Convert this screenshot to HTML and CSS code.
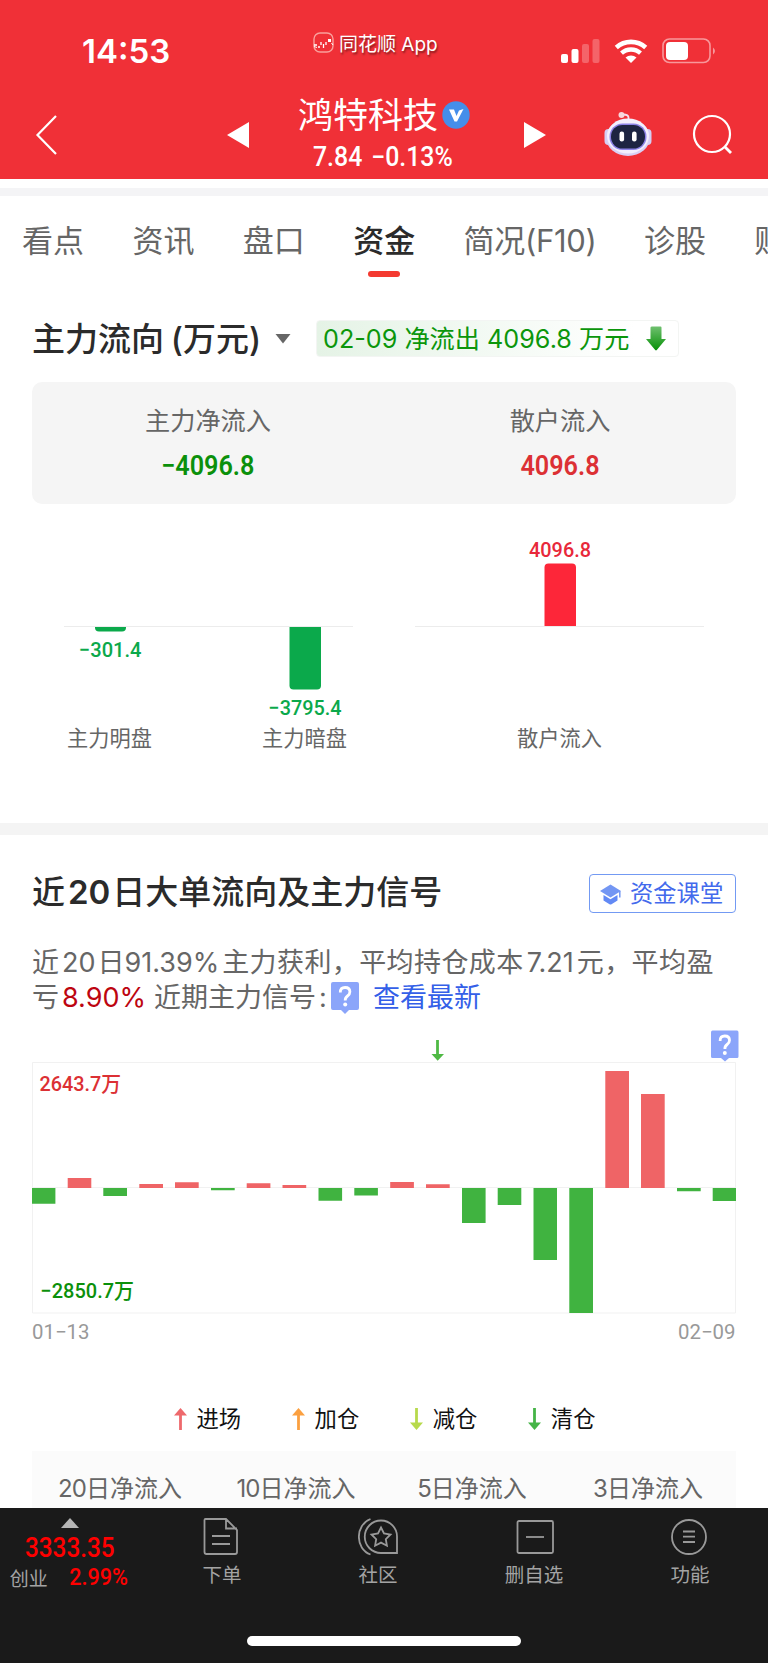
FILE: index.html
```html
<!DOCTYPE html>
<html lang="zh-CN">
<head>
    <meta charset="UTF-8">
    <meta name="viewport" content="width=device-width, initial-scale=1.0">
    <title>鸿特科技 - 资金</title>
    <link rel="stylesheet" href="styles.css">
</head>
<body>
    <header class="header">
        <div class="status-bar">
            <div class="time">14:53</div>
            <div class="app-name">
                <svg width="22" height="22" viewBox="0 0 22 22" fill="none">
                    <rect x="1" y="1" width="19" height="19" rx="6" stroke="#f9a09c" stroke-width="1.4"/>
                    <path d="M1 13h3M5 15h2M8 10v3M10.500 12v4M13 10v3" stroke="#fff" stroke-width="1.3"/>
                    <rect x="15" y="7" width="3" height="3" fill="#fff"/>
                    <path d="M1 14.500l3 1M18.500 11l1.500 2" stroke="#fff"/>
                </svg>
                <span>同花顺 App</span>
            </div>
            <svg class="status-icons" width="156" height="28" viewBox="0 0 156 28" fill="#fff">
                <rect x="1" y="16" width="7" height="9" rx="2"/>
                <rect x="11.500" y="11" width="7" height="14" rx="2"/>
                <rect x="22" y="6" width="7" height="19" rx="2" opacity=".25"/>
                <rect x="32.500" y="1" width="7" height="24" rx="2" opacity=".25"/>
                <path d="M56.300 9.500a22 22 0 0 1 29.400 0" fill="none" stroke="#fff" stroke-width="4.600"/>
                <path d="M61.500 15.200a14 14 0 0 1 19 0" fill="none" stroke="#fff" stroke-width="4.300"/>
                <path d="M65.500 19.600a8 8 0 0 1 11 0L71 25z"/>
                <rect x="103" y="1" width="47" height="23.500" rx="6.500" fill="none" stroke="#fff" stroke-width="1.600" opacity=".5"/>
                <rect x="106" y="4" width="22" height="18" rx="4"/>
                <path d="M153 9.500q4 3.500 0 7z" opacity=".5"/>
            </svg>
        </div>
        <div class="nav-bar">
            <svg class="back" width="24" height="42" viewBox="0 0 24 42" fill="none" stroke="#fff" stroke-width="2.200">
                <path d="M21 2L2.500 21L21 40"/>
            </svg>
            <svg class="prev" width="22" height="26" viewBox="0 0 22 26" fill="#fff"><path d="M22 0v26L0 13z"/></svg>
            <div class="stock">
                <div class="stock-name">
                    <span>鸿特科技</span>
                    <svg width="28" height="28" viewBox="0 0 28 28">
                        <circle cx="14" cy="14" r="13.700" fill="#458eea"/>
                        <path d="M7 8.500h5l2.500 6.500l2.500-5.500l4.500-1.500L15 20.500h-2.500z" fill="#fff"/>
                    </svg>
                </div>
                <div class="stock-price"><span class="num">7.84 −0.13%</span></div>
            </div>
            <svg class="next" width="22" height="26" viewBox="0 0 22 26" fill="#fff"><path d="M0 0v26l22-13z"/></svg>
            <svg class="robot" width="48" height="46" viewBox="0 0 48 46">
                <path d="M24.500 9V6.500q0-3-5.500-3" fill="none" stroke="#f4dfee" stroke-width="1.800"/>
                <circle cx="17.500" cy="4" r="3" fill="#f8d6dc"/>
                <rect x="0.500" y="18" width="8" height="16" rx="4" fill="#d5cef3"/>
                <rect x="39.500" y="18" width="8" height="16" rx="4" fill="#d5cef3"/>
                <ellipse cx="24" cy="26.500" rx="22" ry="18.500" fill="#d9d0f5"/>
                <ellipse cx="24" cy="25" rx="21" ry="17.500" fill="#f3effd"/>
                <rect x="5.500" y="12.500" width="37" height="26.500" rx="13" fill="#8c82e6"/>
                <rect x="7" y="14" width="34" height="23.500" rx="11.500" fill="#1d2442"/>
                <rect x="15.500" y="20.500" width="4.600" height="10" rx="2.200" fill="#fff"/>
                <rect x="28" y="20.500" width="4.600" height="10" rx="2.200" fill="#fff"/>
            </svg>
            <svg class="search" width="42" height="42" viewBox="0 0 42 42" fill="none" stroke="#fff" stroke-width="2.200">
                <circle cx="20" cy="20" r="18"/>
                <path d="M32.500 32.500l6.500 6.500" stroke-width="2.800"/>
            </svg>
        </div>
    </header>

    <nav class="tabs">
        <a>看点</a>
        <a>资讯</a>
        <a>盘口</a>
        <a class="active">资金</a>
        <a class="tab-f10">简况(F10)</a>
        <a>诊股</a>
        <a>财务</a>
    </nav>

    <section class="flow">
        <div class="flow-head">
            <h2>主力流向 (万元)</h2>
            <svg class="caret" width="16" height="10" viewBox="0 0 16 10"><path d="M0.500 0h15L8 9.500z" fill="#666"/></svg>
            <div class="badge">
                <span>02-09 净流出 4096.8 万元</span>
                <svg width="20" height="25" viewBox="0 0 20 25">
                    <defs>
                        <linearGradient id="down" x1="0" y1="0" x2="0" y2="1">
                            <stop offset="0" stop-color="#6fc06f"/>
                            <stop offset="1" stop-color="#069006"/>
                        </linearGradient>
                    </defs>
                    <path d="M6 0.500h8.500q1 0 1 1V13H20L10.800 24q-.8.800-1.600 0L0 13h4.500V1.500q0-1 1.500-1z" fill="url(#down)"/>
                </svg>
            </div>
        </div>
        <div class="summary">
            <div class="summary-item">
                <p>主力净流入</p>
                <strong class="num green">−4096.8</strong>
            </div>
            <div class="summary-item">
                <p>散户流入</p>
                <strong class="num red">4096.8</strong>
            </div>
        </div>
        <svg class="flow-chart" width="704" height="256" viewBox="32 524 704 256">
            <path d="M64 626.500h289M415 626.500h289" stroke="#ececec"/>
            <path d="M95 627h31v.5q0 4-4 4H99q-4 0-4-4z" fill="#0ba94b"/>
            <path d="M289.500 627h31.500v58.500q0 4-4 4h-23.500q-4 0-4-4z" fill="#0ba94b"/>
            <path d="M544.500 626v-58.500q0-4 4-4H572q4 0 4 4V626z" fill="#fd2639"/>
            <g class="bar-value">
                <text x="79" y="656.800" textLength="62.500" lengthAdjust="spacingAndGlyphs" fill="#0ba94b">−301.4</text>
                <text x="268.500" y="714.500" textLength="73" lengthAdjust="spacingAndGlyphs" fill="#0ba94b">−3795.4</text>
                <text x="529" y="557" textLength="62" lengthAdjust="spacingAndGlyphs" fill="#e8283a">4096.8</text>
            </g>
            <g class="bar-label">
                <text x="109.500" y="745.500">主力明盘</text>
                <text x="304.500" y="745.500">主力暗盘</text>
                <text x="559.500" y="745.500">散户流入</text>
            </g>
        </svg>
    </section>

    <section class="signal">
        <div class="signal-head">
            <h2>近<b>20</b>日大单流向及主力信号</h2>
            <a class="course">
                <svg width="22" height="22" viewBox="0 0 22 22" fill="#6289f5">
                    <path d="M0 8L10.500 1.500L21 8L10.500 14.500z" fill="#7396f3"/>
                    <path d="M3.500 12l7 4.300l7-4.300v5.500l-6 3.700q-1 .6-2 0l-6-3.700z"/>
                    <path d="M19.800 8v6.500" stroke="#7396f3" stroke-width="1.500"/>
                </svg>
                <span>资金课堂</span>
            </a>
        </div>
        <div class="desc">
            <div class="desc-line"><span>近</span><span class="sp">20</span><span class="day">日</span><span>91.39%</span><span class="sp cjk">主力获利，</span><span class="cjk">平均持仓成本</span><span class="sp">7.21</span><span class="sp cjk">元，</span><span class="cjk">平均盈</span></div>
            <div class="desc-line">
                <span>亏</span><span class="sp profit">8.90%</span><span class="recent">近期主力信号</span><span class="colon">:</span>
                <svg class="help" width="28" height="32" viewBox="0 0 28 32">
                    <path d="M2 0h24q2 0 2 2v24q0 2-2 2h-8l-4 4l-4-4H2q-2 0-2-2V2q0-2 2-2z" fill="#8ba5fa"/>
                    <path d="M9.300 10.500q0-5 4.800-5t4.800 4.300q0 2.500-2.400 4.200t-2.300 4.500" fill="none" stroke="#fff" stroke-width="2.800"/>
                    <circle cx="14.200" cy="22.600" r="2" fill="#fff"/>
                </svg>
                <a class="latest">查看最新</a>
            </div>
        </div>
        <svg class="history" width="708" height="320" viewBox="32 1028 708 320">
            <path d="M32.500 1062.500h703v250.500h-703zM32 1187.500h704" fill="none" stroke="#f1f1f1"/>
            <g fill="#ef6466">
                <path d="M67.700 1178h23.600v10H67.700zM139.300 1184h23.700v4h-23.700zM175 1182.300h23.700v5.700H175zM246.700 1183.300h23.700v4.700h-23.700zM282.500 1185h23.700v3h-23.700zM390.200 1182h23.700v6h-23.700zM426 1184.200h23.700v3.800H426zM605.300 1071h23.700v117h-23.700zM641 1094h23.700v94H641z"/>
            </g>
            <g fill="#40b340">
                <path d="M32 1188h23.400v15.700H32zM103.300 1188H127v8h-23.700zM211 1188h23.700v2.300H211zM318.500 1188h23.600v12.700h-23.600zM354.300 1188h23.600v7.500h-23.600zM462 1188h23.600v35H462zM497.700 1188h23.600v17h-23.600zM533.500 1188H557v72h-23.500zM569.300 1188H593v125h-23.700zM677 1188h23.700v3.200H677zM712.700 1188H736v13h-23.300z"/>
            </g>
            <path d="M437.500 1040v17" stroke="#4fb944" stroke-width="2.800"/>
            <path d="M431.500 1054h12.500l-6.300 6.700z" fill="#4fb944"/>
            <g transform="translate(711 1030.500)">
                <path d="M1.500 0H26q1.500 0 1.500 2v24q0 1.500-1.500 1.500h-8l-4 3.500l-4-3.500H1.500Q0 27.500 0 26V2q0-2 1.500-2z" fill="#8ba5fa"/>
                <path d="M9.100 10.500q0-5 4.700-5t4.700 4.300q0 2.500-2.400 4.200t-2.200 4.500" fill="none" stroke="#fff" stroke-width="2.800"/>
                <circle cx="13.800" cy="22.400" r="2" fill="#fff"/>
            </g>
            <g class="axis-value">
                <text x="39.500" y="1090.500" textLength="81.500" lengthAdjust="spacingAndGlyphs" fill="#dc3034">2643.7万</text>
                <text x="40.500" y="1297.500" textLength="93.500" lengthAdjust="spacingAndGlyphs" fill="#0b900b">−2850.7万</text>
            </g>
            <g class="axis-date">
                <text x="32" y="1338.500" textLength="57.500" lengthAdjust="spacingAndGlyphs">01−13</text>
                <text x="678" y="1338.500" textLength="57.500" lengthAdjust="spacingAndGlyphs">02−09</text>
            </g>
        </svg>
        <ul class="legend">
            <li>
                <svg width="13" height="22" viewBox="0 0 13 22"><path d="M6.500 4v18" stroke="#ee696c" stroke-width="2.800"/><path d="M0 7.500h13L6.500 0z" fill="#ee696c"/></svg>
                <span>进场</span>
            </li>
            <li>
                <svg width="13" height="22" viewBox="0 0 13 22"><path d="M6.500 4v18" stroke="#fba040" stroke-width="2.800"/><path d="M0 7.500h13L6.500 0z" fill="#fba040"/></svg>
                <span>加仓</span>
            </li>
            <li>
                <svg width="13" height="22" viewBox="0 0 13 22"><path d="M6.500 0v18" stroke="#b7da4c" stroke-width="2.800"/><path d="M0 14.500h13L6.500 22z" fill="#b7da4c"/></svg>
                <span>减仓</span>
            </li>
            <li>
                <svg width="13" height="22" viewBox="0 0 13 22"><path d="M6.500 0v18" stroke="#45b447" stroke-width="2.800"/><path d="M0 14.500h13L6.500 22z" fill="#45b447"/></svg>
                <span>清仓</span>
            </li>
        </ul>
        <div class="period">
            <span><i>20</i>日净流入</span>
            <span><i>10</i>日净流入</span>
            <span><i>5</i>日净流入</span>
            <span><i>3</i>日净流入</span>
        </div>
    </section>

    <footer class="toolbar">
        <div class="toolbar-row">
            <div class="index">
                <svg width="18" height="10" viewBox="0 0 18 10"><path d="M0 10L9 0l9 10z" fill="#b5b5b5"/></svg>
                <div class="index-value"><span class="num">3333.35</span></div>
                <div class="index-change"><span>创业</span><span class="num">2.99%</span></div>
            </div>
            <a class="tool">
                <svg width="40" height="38" viewBox="0 0 40 38" fill="none" stroke="#999" stroke-width="1.800">
                    <path d="M3.500 1H24l11 11v22q0 2-2 2H4.500q-2 0-2-2V2q0-1 1-1zM24 1v9.500h11M10 18h18M10 26h18"/>
                </svg>
                <span>下单</span>
            </a>
            <a class="tool">
                <svg width="40" height="38" viewBox="0 0 40 38" fill="none" stroke="#999" stroke-width="1.800">
                    <path d="M12.500 1C-3 7-3 31 12.500 36.500"/>
                    <path d="M23 2.500a16 16 0 0 0 0 32.500h16V19A16 16 0 0 0 23 2.500z"/>
                    <path d="M23 9.500l3 6l6.500 1l-4.700 4.700l1.100 6.500l-5.900-3.100l-5.900 3.100l1.100-6.500L13.500 16.500l6.500-1z"/>
                </svg>
                <span>社区</span>
            </a>
            <a class="tool">
                <svg width="40" height="38" viewBox="0 0 40 38" fill="none" stroke="#999" stroke-width="1.800">
                    <rect x="3.500" y="3" width="35.500" height="32" rx="1.500"/>
                    <path d="M12 19h18"/>
                </svg>
                <span>删自选</span>
            </a>
            <a class="tool">
                <svg width="40" height="38" viewBox="0 0 40 38" fill="none" stroke="#999" stroke-width="1.800">
                    <circle cx="19" cy="19" r="17"/>
                    <path d="M13 13.500h12M13 18.700h12M13 24h12"/>
                </svg>
                <span>功能</span>
            </a>
        </div>
        <div class="home-indicator"></div>
    </footer>
</body>
</html>
```

FILE: styles.css
```css
* {
    box-sizing: border-box;
    margin: 0;
    padding: 0;
}
body {
    width: 768px;
    height: 1663px;
    overflow: hidden;
    font-family: Inter, "Noto Sans CJK SC", sans-serif;
    background: #fff;
    color: #666;
    display: flex;
    flex-direction: column;
    white-space: nowrap;
}
svg {
    display: block;
    flex: none;
}
.num {
    display: inline-block;
    font-family: Roboto, sans-serif;
    transform: scaleX(0.9);
}
.green {
    color: #0b900b;
}
.red {
    color: #dc3034;
}

/* header */
.header {
    flex: none;
    height: 179px;
    background: #f03037;
    color: #fff;
}
.status-bar {
    display: flex;
    height: 94px;
    padding-left: 82px;
}
.time {
    width: 230px;
    padding-top: 31px;
    font-size: 33px;
    line-height: 41px;
    font-weight: 600;
}
.app-name {
    display: flex;
    gap: 4px;
    width: 248px;
    padding: 32px 0 0 1px;
    font-size: 19px;
    line-height: 25px;
    text-shadow: 1px 2px 2px rgba(0, 0, 0, 0.45);
}
.status-icons {
    margin-top: 38px;
}
.nav-bar {
    display: flex;
    height: 85px;
}
.back {
    margin: 20px 0 0 35px;
}
.prev {
    margin: 28px 0 0 168px;
}
.stock {
    width: 275px;
}
.stock-name {
    display: flex;
    align-items: center;
    gap: 4px;
    height: 42px;
    padding-left: 49px;
    font-size: 35px;
    line-height: 42px;
}
.stock-price {
    height: 42px;
    padding-left: 64px;
    font-size: 27px;
    line-height: 41px;
    font-weight: 500;
    word-spacing: 3px;
}
.stock-price .num {
    transform: scaleX(0.92);
    transform-origin: left;
}
.next {
    margin-top: 28px;
}
.robot {
    margin: 17px 0 0 58px;
}
.search {
    margin: 20px 0 0 40px;
}

/* tabs */
.tabs {
    display: flex;
    flex: none;
    gap: 48.400px;
    height: 112px;
    margin-top: 9px;
    padding: 28px 0 0 22px;
    border-top: 8px solid #f4f4f6;
    overflow: hidden;
    font-size: 31px;
    line-height: 33px;
}
.tabs a {
    flex: none;
    height: 53px;
}
.tabs .active {
    display: flex;
    flex-direction: column;
    align-items: center;
    justify-content: space-between;
    color: #2b2b2b;
    font-weight: 500;
}
.tabs .active::after {
    content: "";
    width: 32px;
    height: 6px;
    border-radius: 3px;
    background: #f43a30;
}
.tabs .tab-f10 {
    width: 132px;
    letter-spacing: -0.3px;
}

/* main capital flow */
.flow {
    flex: none;
    height: 523px;
    padding: 20px 32px 0;
}
.flow-head {
    display: flex;
    align-items: center;
    height: 37px;
}
h2 {
    color: #2b2b2b;
    font-size: 33px;
    line-height: 38px;
    font-weight: 500;
}
.flow-head h2 {
    width: 243px;
    word-spacing: -2px;
}
.badge {
    display: flex;
    align-items: center;
    justify-content: space-between;
    width: 363px;
    height: 37px;
    margin-left: 25px;
    padding: 0 12px 0 6px;
    border: 1px solid #f3f5f3;
    border-radius: 4px;
    background: linear-gradient(90deg, #e5f3e6, #fff 88%);
    color: #0b960b;
    font-size: 25.200px;
}
.badge span {
    padding-bottom: 3px;
}
.summary {
    display: flex;
    height: 122px;
    margin-top: 25px;
    border-radius: 10px;
    background: #f5f5f5;
}
.summary-item {
    flex: 1;
    padding-top: 22px;
    text-align: center;
}
.summary p {
    font-size: 25.200px;
    line-height: 35px;
}
.summary strong {
    margin-top: 9px;
    font-size: 28px;
    line-height: 36px;
    font-weight: 600;
}
.flow-chart {
    margin-top: 20px;
}
.bar-value, .axis-value, .axis-date {
    font-family: Roboto, "Noto Sans CJK SC", sans-serif;
    font-size: 21px;
    font-weight: 500;
}
.bar-label {
    font-size: 21.200px;
    fill: #666;
    text-anchor: middle;
}

/* signals */
.signal {
    flex: none;
    height: 685px;
    padding: 39px 32px 0;
    border-top: 12px solid #f4f4f4;
    overflow: hidden;
}
.signal-head {
    display: flex;
    align-items: center;
    justify-content: space-between;
    height: 39px;
}
.signal-head h2 {
    padding-bottom: 4px;
}
.signal-head b {
    margin: 0 2px 0 3px;
    font-weight: 600;
}
.course {
    display: flex;
    align-items: center;
    gap: 8px;
    width: 147px;
    height: 39px;
    padding-left: 10px;
    border: 1.500px solid #739af3;
    border-radius: 4px;
    color: #436aec;
    font-size: 23.300px;
}
.course span {
    padding-bottom: 3px;
}
.desc {
    margin-top: 32px;
    height: 83px;
    font-size: 27px;
    line-height: 35px;
}
.desc-line {
    display: flex;
    height: 35px;
}
.desc .sp {
    margin-left: 3px;
}
.desc .cjk {
    letter-spacing: 0.400px;
}
.desc .day {
    margin-left: 2px;
}
.desc .profit {
    color: #bd0510;
}
.desc .recent {
    margin-left: 8px;
}
.desc .colon {
    width: 13px;
    padding-left: 3px;
}
.help {
    margin: 2px 0 0 2px;
}
.desc .latest {
    margin-left: 14px;
    color: #345fe8;
}
.axis-date {
    fill: #999;
    font-weight: 400;
}
.legend {
    display: flex;
    gap: 50.500px;
    height: 103px;
    padding: 54px 0 0 141.500px;
    list-style: none;
    color: #111;
    font-size: 22.300px;
    line-height: 34px;
}
.legend li {
    display: flex;
    align-items: center;
    gap: 10px;
    height: 34px;
}
.period {
    display: flex;
    height: 57px;
    background: #fbfbfb;
    font-size: 24px;
    line-height: 76px;
}
.period span {
    width: 176px;
    text-align: center;
}
.period i {
    letter-spacing: -1px;
    font-style: normal;
}

/* bottom toolbar */
.toolbar {
    flex: none;
    height: 155px;
    background: #1a1a1a;
    color: #a3a3a3;
    font-size: 19.500px;
}
.toolbar-row {
    display: flex;
    height: 128px;
}
.index {
    display: flex;
    flex-direction: column;
    align-items: center;
    width: 144px;
    padding: 10px 5px 0 0;
}
.index .num {
    color: #f00;
    font-weight: 500;
}
.index-value {
    height: 38px;
    font-size: 27px;
    line-height: 39px;
}
.index-change {
    display: flex;
    align-items: center;
    gap: 18px;
    height: 22px;
    padding-left: 2px;
    font-size: 19px;
}
.index-change .num {
    font-size: 24px;
}
.tool {
    display: flex;
    flex: 1;
    flex-direction: column;
    align-items: center;
    padding-top: 10px;
}
.tool span {
    line-height: 38px;
}
.home-indicator {
    width: 274px;
    height: 10px;
    margin: 0 auto;
    border-radius: 5px;
    background: #fff;
}
```
